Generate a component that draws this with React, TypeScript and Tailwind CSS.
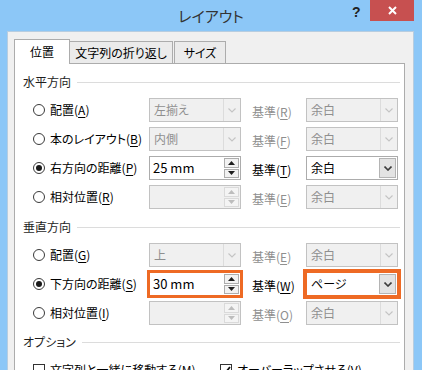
import clsx from 'clsx'

const jp = "font-['Noto_Sans_CJK_JP','Noto_Sans',sans-serif] [font-feature-settings:'palt']"

function Chevron({ enabled }: { enabled: boolean }) {
    return (
        <svg width="8" height="5" viewBox="0 0 8 5">
            <polyline points="0.5,0.5 4,4 7.5,0.5" fill="none"
                stroke={enabled ? '#3c3c3c' : '#c4c4c4'} strokeWidth={enabled ? 1.6 : 1.1} />
        </svg>
    )
}

function Combo({ value, enabled, highlight }: { value: string, enabled: boolean, highlight?: boolean }) {
    return (
        <div className={clsx(
            "flex h-[24px] w-[92px] items-stretch border",
            enabled ? "bg-white border-[#acacac]" : "bg-[#f0f0f0] border-[#c2c2c2]",
            highlight && "ring-[3px] ring-[#ee6a24] border-[#ee6a24]"
        )}>
            <span className={clsx("flex-1 pl-[4px] text-[12px] leading-[22px]", enabled ? "text-black" : "text-[#8f8f8f]")}>{value}</span>
            <div className={clsx(
                "flex w-[17px] items-center justify-center",
                enabled ? "bg-[#e3e3e3] border border-[#b4b4b4] m-[1px] w-[16px]" : "border-l border-[#dcdcdc]"
            )}>
                <Chevron enabled={enabled} />
            </div>
        </div>
    )
}

function Tri({ up, enabled }: { up: boolean, enabled: boolean }) {
    return (
        <svg width="7" height="4" viewBox="0 0 7 4">
            <polygon points={up ? "0,4 7,4 3.5,0" : "0,0 7,0 3.5,4"} fill={enabled ? '#1e1e1e' : '#bdbdbd'} />
        </svg>
    )
}

function Spin({ value, enabled, highlight }: { value: string, enabled: boolean, highlight?: boolean }) {
    return (
        <div className={clsx(
            "flex h-[24px] w-[92px] items-stretch border",
            enabled ? "bg-white border-[#acacac]" : "bg-[#f0f0f0] border-[#c2c2c2]",
            highlight && "ring-2 ring-[#ee6a24] border-[#ee6a24]"
        )}>
            <span className="flex-1 pl-[3px] text-[13px] leading-[22px] text-black">{value}</span>
            <div className="flex w-[16px] flex-col gap-[1px] py-[1px] pr-[1px]">
                <div className={clsx("flex flex-1 items-center justify-center border", enabled ? "bg-[#f2f2f2] border-[#adadad]" : "bg-[#f4f4f4] border-[#dadada]")}>
                    <Tri up enabled={enabled} />
                </div>
                <div className={clsx("flex flex-1 items-center justify-center border", enabled ? "bg-[#f2f2f2] border-[#adadad]" : "bg-[#f4f4f4] border-[#dadada]")}>
                    <Tri up={false} enabled={enabled} />
                </div>
            </div>
        </div>
    )
}

function Radio({ checked }: { checked?: boolean }) {
    return (
        <div className="flex h-[12px] w-[12px] items-center justify-center rounded-full border border-[#3a3a3a] bg-white">
            {checked && <div className="h-[6px] w-[6px] rounded-full bg-[#1a1a1a]" />}
        </div>
    )
}

function Label({ text, mn, enabled = true }: { text: string, mn: string, enabled?: boolean }) {
    return (
        <span className={clsx("text-[12px] leading-[16px] whitespace-nowrap", enabled ? "text-black" : "text-[#8f8f8f]")}>
            {text}(<span className="underline underline-offset-2">{mn}</span>)
        </span>
    )
}

interface RowProps {
    text: string
    mn: string
    checked?: boolean
    left: React.ReactNode
    baseMn: string
    baseEnabled: boolean
    right: React.ReactNode
}

function Row({ text, mn, checked, left, baseMn, baseEnabled, right }: RowProps) {
    return (
        <div className="grid h-[24px] grid-cols-[134px_92px_65px_92px] items-center">
            <div className="flex items-center gap-[5px] pl-[18px]">
                <Radio checked={checked} />
                <Label text={text} mn={mn} />
            </div>
            {left}
            <div className="pl-[11px]">
                <Label text="基準" mn={baseMn} enabled={baseEnabled} />
            </div>
            {right}
        </div>
    )
}

function Section({ title, className }: { title: string, className?: string }) {
    return (
        <div className={clsx("flex h-[16px] items-center gap-[6px] pl-[8px] pr-[4px]", className)}>
            <span className="text-[12px] leading-[16px] text-[#1e1e1e]">{title}</span>
            <div className="h-px flex-1 bg-[#dcdcdc]" />
        </div>
    )
}

function Check({ checked }: { checked?: boolean }) {
    return (
        <div className="flex h-[12px] w-[12px] items-center justify-center border border-[#333] bg-white">
            {checked && (
                <svg width="10" height="9" viewBox="0 0 10 9">
                    <polyline points="1,4.5 3.8,7.5 9,1" fill="none" stroke="#111" strokeWidth="1.8" />
                </svg>
            )}
        </div>
    )
}

export default function App() {
    return (
        <div className={clsx("flex h-[370px] w-[422px] flex-col overflow-hidden bg-[#8cc7f7]", jp)}>
            <div className="relative h-[31px] shrink-0">
                <div className="pt-[5px] text-center text-[15px] leading-[22px] text-[#333]">レイアウト</div>
                <span className="absolute left-[352px] top-[4px] font-['Liberation_Sans',sans-serif] text-[14px] font-bold leading-[16px] text-[#222]">?</span>
                <div className="absolute left-[370px] top-0 flex h-[21px] w-[44px] items-center justify-center bg-[#c75050]">
                    <svg width="9" height="9" viewBox="0 0 9 9">
                        <path d="M1 1 L8 8 M8 1 L1 8" stroke="white" strokeWidth="2" />
                    </svg>
                </div>
            </div>
            <div className="ml-[7px] w-[407px] flex-1 border-l border-t border-r border-[#b7cde0] bg-[#f0f0f0] pl-[6px] pt-[7px]">
                <div className="flex h-[24px] items-end text-[12px] text-black">
                    <div className="relative z-10 -mb-px flex h-[25px] w-[56px] items-center justify-center border border-b-0 border-[#acacac] bg-white">位置</div>
                    <div className="flex h-[22px] w-[103px] items-center justify-center border-t border-r border-[#acacac] bg-[#ebebeb]">文字列の折り返し</div>
                    <div className="ml-px flex h-[22px] w-[52px] items-center justify-center border-t border-l border-r border-[#acacac] bg-[#ebebeb]">サイズ</div>
                </div>
                <div className="h-[400px] w-[391px] border border-[#acacac] bg-white pt-[10px]">
                    <Section title="水平方向" />
                    <div className="mt-[8px] flex flex-col gap-[5px]">
                        <Row text="配置" mn="A" left={<Combo value="左揃え" enabled={false} />} baseMn="R" baseEnabled={false} right={<Combo value="余白" enabled={false} />} />
                        <Row text="本のレイアウト" mn="B" left={<Combo value="内側" enabled={false} />} baseMn="F" baseEnabled={false} right={<Combo value="余白" enabled={false} />} />
                        <Row text="右方向の距離" mn="P" checked left={<Spin value="25 mm" enabled />} baseMn="T" baseEnabled right={<Combo value="余白" enabled />} />
                        <Row text="相対位置" mn="R" left={<Spin value="" enabled={false} />} baseMn="E" baseEnabled={false} right={<Combo value="余白" enabled={false} />} />
                    </div>
                    <Section title="垂直方向" className="mt-[10px]" />
                    <div className="mt-[8px] flex flex-col gap-[5px]">
                        <Row text="配置" mn="G" left={<Combo value="上" enabled={false} />} baseMn="E" baseEnabled={false} right={<Combo value="余白" enabled={false} />} />
                        <Row text="下方向の距離" mn="S" checked left={<Spin value="30 mm" enabled highlight />} baseMn="W" baseEnabled right={<Combo value="ページ" enabled highlight />} />
                        <Row text="相対位置" mn="I" left={<Spin value="" enabled={false} />} baseMn="O" baseEnabled={false} right={<Combo value="余白" enabled={false} />} />
                    </div>
                    <Section title="オプション" className="mt-[9px]" />
                    <div className="mt-[12px] grid grid-cols-[205px_1fr] items-center">
                        <div className="flex items-center gap-[5px] pl-[18px]">
                            <Check />
                            <Label text="文字列と一緒に移動する" mn="M" />
                        </div>
                        <div className="flex items-center gap-[5px]">
                            <Check checked />
                            <Label text="オーバーラップさせる" mn="V" />
                        </div>
                    </div>
                </div>
            </div>
        </div>
    )
}
